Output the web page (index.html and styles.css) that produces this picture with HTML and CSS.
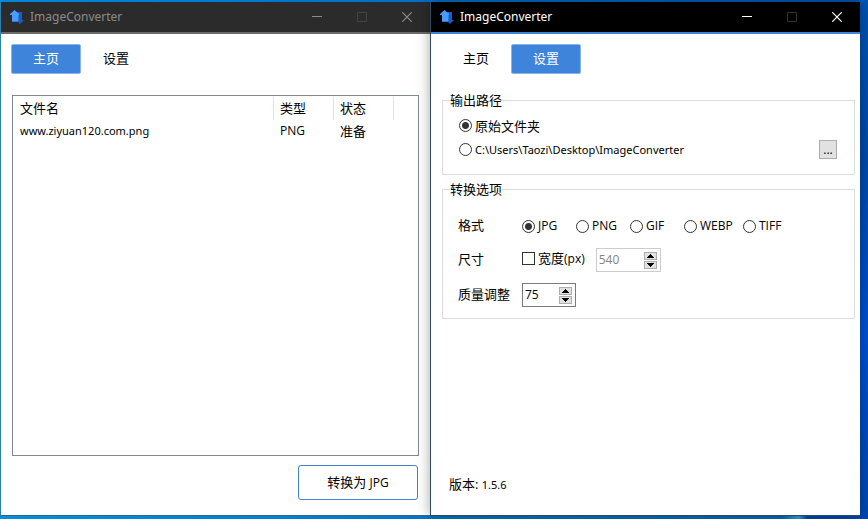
FILE: index.html
```html
<!DOCTYPE html>
<html lang="zh-CN">
<head>
<meta charset="utf-8">
<title>ImageConverter</title>
<link rel="stylesheet" href="styles.css">
</head>
<body>
<svg class="symbols" aria-hidden="true">
  <symbol id="logo" viewBox="0 0 14 14">
    <path fill="#1b5cc4" d="M6 2h6v8h2l-4 4-4-4z"/>
    <path fill="#2b78e4" d="M2 10h6v2H2zM7 3h2v8H7z"/>
    <path fill="#4a9cfb" d="M4.500 0L9 4v1H8v6H2V5H0V4z"/>
  </symbol>
  <symbol id="minimize" viewBox="0 0 10 10"><path d="M0 4.500h10" stroke="currentColor" fill="none"/></symbol>
  <symbol id="maximize" viewBox="0 0 10 10"><path d="M.5.5h9v9h-9z" stroke="currentColor" fill="none"/></symbol>
  <symbol id="close" viewBox="0 0 10 10"><path d="M.3.3l9.400 9.400M9.700.3L.3 9.700" stroke="currentColor" stroke-width="1.200" fill="none"/></symbol>
</svg>
<main class="desktop">
  <section class="window inactive">
    <header class="titlebar">
      <svg class="logo"><use href="#logo"/></svg>
      <h1 class="title">ImageConverter</h1>
      <button class="control" type="button" aria-label="最小化"><svg><use href="#minimize"/></svg></button>
      <button class="control" type="button" aria-label="最大化" disabled><svg><use href="#maximize"/></svg></button>
      <button class="control" type="button" aria-label="关闭"><svg><use href="#close"/></svg></button>
    </header>
    <div class="content">
      <nav class="tabs">
        <button class="tab selected" type="button">主页</button>
        <button class="tab" type="button">设置</button>
      </nav>
      <div class="list">
        <table class="files">
          <colgroup><col><col class="narrow"><col class="narrow"><col class="rest"></colgroup>
          <thead><tr><th>文件名</th><th>类型</th><th>状态</th><td></td></tr></thead>
          <tbody><tr><td class="small">www.ziyuan120.com.png</td><td class="latin">PNG</td><td>准备</td><td></td></tr></tbody>
        </table>
      </div>
      <button class="convert" type="button">转换为 <span class="latin">JPG</span></button>
    </div>
  </section>
  <section class="window active">
    <header class="titlebar">
      <svg class="logo"><use href="#logo"/></svg>
      <h1 class="title">ImageConverter</h1>
      <button class="control" type="button" aria-label="最小化"><svg><use href="#minimize"/></svg></button>
      <button class="control" type="button" aria-label="最大化" disabled><svg><use href="#maximize"/></svg></button>
      <button class="control" type="button" aria-label="关闭"><svg><use href="#close"/></svg></button>
    </header>
    <div class="content">
      <nav class="tabs">
        <button class="tab" type="button">主页</button>
        <button class="tab selected" type="button">设置</button>
      </nav>
      <div class="groups">
        <fieldset class="group">
          <legend>输出路径</legend>
          <div class="paths">
            <div class="row"><label class="choice"><input type="radio" name="path" checked>原始文件夹</label></div>
            <div class="row">
              <label class="choice small"><input type="radio" name="path">C:\Users\Taozi\Desktop\ImageConverter</label>
              <button class="browse latin" type="button">...</button>
            </div>
          </div>
        </fieldset>
        <fieldset class="group">
          <legend>转换选项</legend>
          <div class="options">
            <span>格式</span>
            <div class="formats latin">
              <label class="choice"><input type="radio" name="format" checked>JPG</label>
              <label class="choice"><input type="radio" name="format">PNG</label>
              <label class="choice"><input type="radio" name="format">GIF</label>
              <label class="choice"><input type="radio" name="format">WEBP</label>
              <label class="choice"><input type="radio" name="format">TIFF</label>
            </div>
            <span class="caption">尺寸</span>
            <div class="size">
              <label class="choice caption"><input type="checkbox"><span>宽度<span class="latin">(px)</span></span></label>
              <div class="spin wide off">
                <input class="latin" type="text" value="540" aria-label="宽度(px)" disabled>
                <div class="steps"><button type="button" aria-label="增加"><svg viewBox="0 0 7 4"><path d="M3 0h1v1h1v1h1v1h1v1H0V3h1V2h1V1h1z"/></svg></button><button type="button" aria-label="减少"><svg viewBox="0 0 7 4"><path d="M0 0h7v1H6v1H5v1H4v1H3V3H2V2H1V1H0z"/></svg></button></div>
              </div>
            </div>
            <label class="caption" for="quality">质量调整</label>
            <div class="spin">
              <input class="latin" id="quality" type="text" value="75">
              <div class="steps"><button type="button" aria-label="增加"><svg viewBox="0 0 7 4"><path d="M3 0h1v1h1v1h1v1h1v1H0V3h1V2h1V1h1z"/></svg></button><button type="button" aria-label="减少"><svg viewBox="0 0 7 4"><path d="M0 0h7v1H6v1H5v1H4v1H3V3H2V2H1V1H0z"/></svg></button></div>
            </div>
          </div>
        </fieldset>
      </div>
      <p class="version">版本: <span class="small">1.5.6</span></p>
    </div>
  </section>
</main>
</body>
</html>
```
FILE: styles.css
```css
* { box-sizing: border-box; }
body {
  margin: 0;
  color: #000;
  font: 13px/18px "Open Sans", "Noto Sans CJK SC", sans-serif;
}
button, input { font: inherit; color: inherit; margin: 0; padding: 0; }
.latin { font-size: 12px; }
.small { font-family: "Noto Sans", sans-serif; font-size: 11px; }
.symbols { display: none; }
.desktop {
  display: grid;
  grid-template-columns: 1fr 1fr;
  min-height: 100vh;
  padding: 2px 8px 3px 0;
  background:
    linear-gradient(#0054b4, #0148aa 30%, #0050d4 65%, #0046b0) right / 8px 100% no-repeat,
    linear-gradient(90deg, #0090d8, #0074c4 55%, #0068bc 90%, #30a8d0 92%, #0048b0 93%) bottom / 100% 3px no-repeat,
    linear-gradient(90deg, #0088dc, #0054b0);
}
.window {
  display: flex;
  flex-direction: column;
  background: #fff;
  border-left: 1px solid #2a7fae;
  border-bottom: 1px solid #2a6690;
}
.window.active {
  position: relative;
  border-color: #2e4a66;
  box-shadow: 0 0 12px rgba(0, 0, 0, .35);
}

.titlebar {
  display: flex;
  align-items: center;
  height: 32px;
  padding: 0 1px 0 9px;
  background: #000;
  border-bottom: 2px solid #3e84da;
  color: #fff;
}
.inactive .titlebar { background: #2b2b2b; border-color: #6b6b6b; color: #8c8c8c; }
.logo { width: 14px; height: 14px; }
.title { flex: 1; margin: 0 0 0 6px; font-family: "Noto Sans", sans-serif; font-size: 12px; font-weight: 400; }
.control {
  display: grid;
  place-items: center;
  width: 45px;
  height: 28px;
  border: 0;
  background: none;
}
.control:disabled { color: #333; }
.inactive .control:disabled { color: #444; }
.control svg { width: 10px; height: 10px; }

.content {
  flex: 1;
  display: flex;
  flex-direction: column;
  padding: 10px 11px 15px;
}
.active .content { padding: 10px 5px 21px 11px; }
.tabs { display: flex; margin-left: -1px; }
.tab {
  width: 70px;
  height: 30px;
  padding-bottom: 2px;
  border: 1px solid transparent;
  border-radius: 2px;
  background: none;
}
.tab.selected { background: #3e84da; border-color: #8ab5ec; color: #fff; }

.list { flex: 1; margin-top: 21px; border: 1px solid #828790; }
.files { width: 100%; border-collapse: collapse; table-layout: fixed; }
.narrow { width: 60px; }
.rest { width: 24px; }
.files th, .files td { height: 22px; padding: 0 0 0 7px; text-align: left; font-weight: 400; }
.files th + th, .files td + td { padding-left: 6px; }
.files thead th { height: 24px; }
.files th {
  background: linear-gradient(#e2e2e2, #e2e2e2) right bottom / 1px 23px no-repeat;
}
.convert {
  align-self: flex-end;
  width: 120px;
  height: 35px;
  margin: 9px 1px 0 0;
  border: 1px solid #3e84da;
  border-radius: 3px;
  background: #fff;
}

.groups { display: grid; gap: 5px; margin-top: 17px; }
.group { min-width: 0; margin: 0; padding: 0 17px 0 15px; border: 1px solid #dcdcdc; }
.group legend { margin-left: -8px; padding: 0; }
.paths { display: grid; gap: 5px; padding: 7px 0 15px 1px; }
.row { display: flex; align-items: center; justify-content: space-between; height: 19px; }
.choice { display: flex; align-items: center; gap: 3px; }
.choice input {
  appearance: none;
  width: 13px;
  height: 13px;
  border: 1px solid #333;
  background: #fff;
}
.choice input[type="radio"] { border-radius: 50%; }
.choice input[type="radio"]:checked { background: radial-gradient(circle, #333 3px, #fff 4px); }
.browse { width: 18px; height: 19px; border: 1px solid #adadad; background: #e1e1e1; }

.options {
  display: grid;
  grid-template-columns: 64px 1fr;
  grid-auto-rows: 24px;
  gap: 11px 0;
  align-items: center;
  padding: 15px 0 11px;
}
.caption { padding-bottom: 3px; }
.formats { display: grid; grid-template-columns: 54px 54px 54px 59px 1fr; padding-top: 2px; }
.size { display: flex; align-items: center; gap: 11px; }
.spin {
  display: flex;
  align-items: center;
  width: 54px;
  height: 24px;
  padding: 0 3px 0 2px;
  border: 1px solid #7a7a7a;
}
.spin.wide { width: 65px; }
.spin.off { border-color: #ccc; }
.spin input { flex: 1; min-width: 0; height: 18px; border: 0; background: none; }
.spin input:disabled { color: #838383; }
.steps { display: grid; gap: 1px; }
.steps button {
  display: grid;
  place-items: center;
  width: 13px;
  height: 8px;
  border: 1px solid #adadad;
  background: #e1e1e1;
}
.steps svg { width: 7px; height: 4px; }
.version { margin: auto 0 0 7px; }
```
